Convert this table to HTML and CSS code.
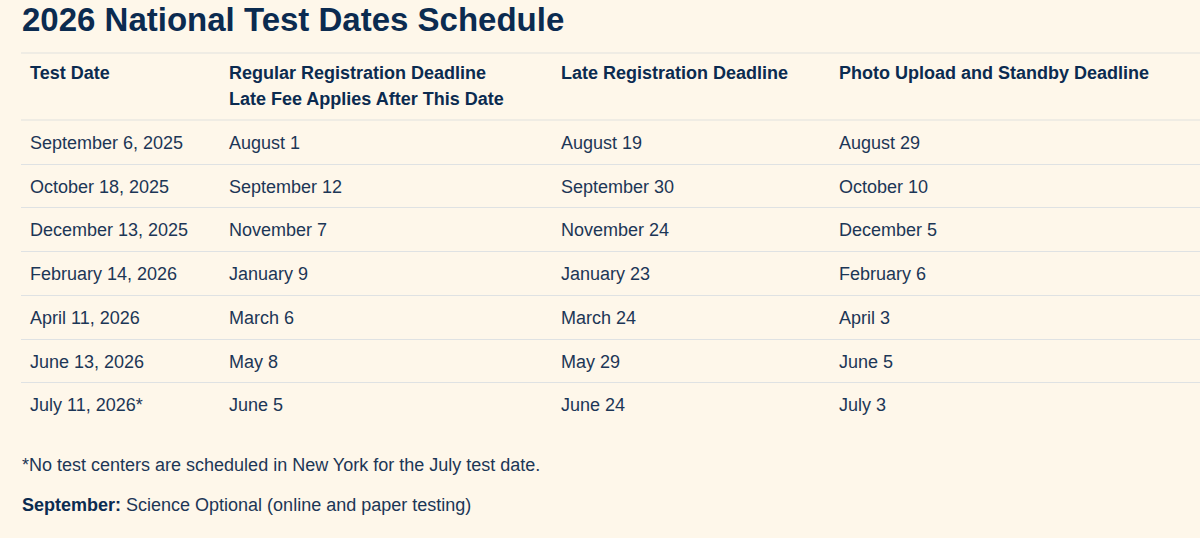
FILE: index.html
```html
<!DOCTYPE html>
<html lang="en">
<head>
<meta charset="utf-8">
<title>2026 National Test Dates Schedule</title>
<link rel="stylesheet" href="styles.css">
</head>
<body>
<main class="page">
  <h1 class="title">2026 National Test Dates Schedule</h1>
  <table class="schedule">
    <colgroup>
      <col class="c1"><col class="c2"><col class="c3"><col class="c4">
    </colgroup>
    <thead>
      <tr>
        <th>Test Date</th>
        <th>Regular Registration Deadline<br>Late Fee Applies After This Date</th>
        <th>Late Registration Deadline</th>
        <th>Photo Upload and Standby Deadline</th>
      </tr>
    </thead>
    <tbody>
      <tr><td>September 6, 2025</td><td>August 1</td><td>August 19</td><td>August 29</td></tr>
      <tr><td>October 18, 2025</td><td>September 12</td><td>September 30</td><td>October 10</td></tr>
      <tr><td>December 13, 2025</td><td>November 7</td><td>November 24</td><td>December 5</td></tr>
      <tr><td>February 14, 2026</td><td>January 9</td><td>January 23</td><td>February 6</td></tr>
      <tr><td>April 11, 2026</td><td>March 6</td><td>March 24</td><td>April 3</td></tr>
      <tr><td>June 13, 2026</td><td>May 8</td><td>May 29</td><td>June 5</td></tr>
      <tr><td>July 11, 2026*</td><td>June 5</td><td>June 24</td><td>July 3</td></tr>
    </tbody>
  </table>
  <p class="note">*No test centers are scheduled in New York for the July test date.</p>
  <p class="note"><strong>September:</strong> Science Optional (online and paper testing)</p>
</main>
</body>
</html>
```

FILE: styles.css
```css
html, body {
  margin: 0;
  padding: 0;
  background: #fef7ea;
}
body {
  font-family: "Liberation Sans", Arial, sans-serif;
  color: #1c3656;
  overflow: hidden;
}
.page {
  padding: 0 0 0 21px;
}
.title {
  margin: 0;
  padding-top: 1px;
  font-size: 33px;
  line-height: 38px;
  font-weight: 700;
  color: #0b2b50;
  padding-left: 1px;
}
.schedule {
  margin-top: 13px;
  width: 100%;
  border-collapse: collapse;
  table-layout: fixed;
  font-size: 18px;
}
.c1 { width: 199px; }
.c2 { width: 332px; }
.c3 { width: 278px; }
.schedule thead tr {
  border-top: 2px solid #efece4;
  border-bottom: 2px solid #efece4;
}
.schedule th {
  text-align: left;
  font-weight: 700;
  color: #0b2b50;
  line-height: 26px;
  padding: 6px 9px 7px 9px;
  vertical-align: top;
}
.schedule td {
  line-height: 25.7px;
  padding: 10px 9px 7px 9px;
  vertical-align: top;
}
.schedule tbody tr + tr {
  border-top: 1px solid #dfe2e3;
}
.note {
  margin: 0;
  font-size: 18px;
  line-height: 26px;
  padding-left: 1px;
}
.note:first-of-type {
  margin-top: 26px;
}
.note + .note {
  margin-top: 14px;
}
.note strong {
  color: #0b2b50;
}
```
